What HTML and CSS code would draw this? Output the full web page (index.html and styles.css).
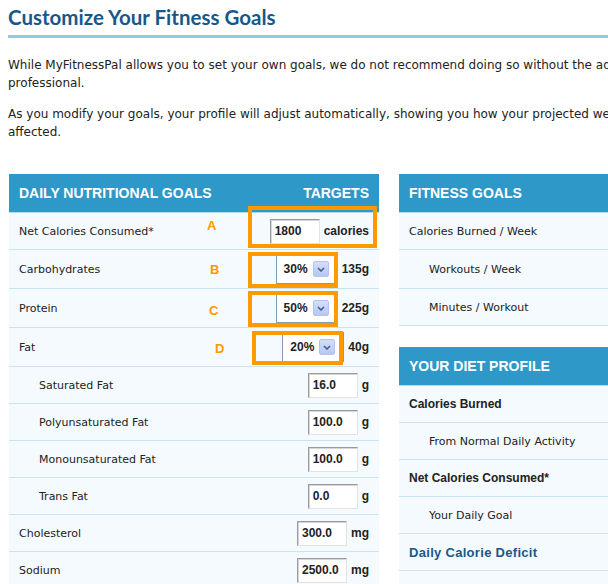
FILE: index.html
```html
<!DOCTYPE html>
<html lang="en">
<head>
  <meta charset="UTF-8">
  <title>Customize Your Fitness Goals</title>
  <link rel="stylesheet" href="styles.css">
</head>
<body>
<div class="page">

  <h1 class="page-title">Customize Your Fitness Goals</h1>
  <p class="intro">While MyFitnessPal allows you to set your own goals, we do not recommend doing so without the advice of a medical professional.</p>
  <p class="intro">As you modify your goals, your profile will adjust automatically, showing you how your projected weight loss will be affected.</p>

  <div class="columns">

    <div class="panel panel-goals">
      <div class="panel-head"><span>DAILY NUTRITIONAL GOALS</span><span>TARGETS</span></div>

      <div class="row">
        <span class="label">Net Calories Consumed*</span>
        <span class="target"><input class="field" type="text" value="1800"><span>calories</span></span>
        <span class="callout callout-a">A</span>
        <span class="mark mark-a"></span>
      </div>

      <div class="row tall">
        <span class="label">Carbohydrates</span>
        <span class="target">
          <span class="select">30%<span class="select-btn"><svg width="8" height="5" viewBox="0 0 8 5"><polyline points="1,1 4,4 7,1" fill="none" stroke="#4a5d8a" stroke-width="1.6"/></svg></span></span>
          <span>135g</span>
        </span>
        <span class="callout callout-b">B</span>
        <span class="mark mark-b"></span>
      </div>

      <div class="row tall">
        <span class="label">Protein</span>
        <span class="target">
          <span class="select">50%<span class="select-btn"><svg width="8" height="5" viewBox="0 0 8 5"><polyline points="1,1 4,4 7,1" fill="none" stroke="#4a5d8a" stroke-width="1.6"/></svg></span></span>
          <span>225g</span>
        </span>
        <span class="callout callout-c">C</span>
        <span class="mark mark-c"></span>
      </div>

      <div class="row tall">
        <span class="label">Fat</span>
        <span class="target">
          <span class="select">20%<span class="select-btn"><svg width="8" height="5" viewBox="0 0 8 5"><polyline points="1,1 4,4 7,1" fill="none" stroke="#4a5d8a" stroke-width="1.6"/></svg></span></span>
          <span>40g</span>
        </span>
        <span class="callout callout-d">D</span>
        <span class="mark mark-d"></span>
      </div>

      <div class="row sub">
        <span class="label">Saturated Fat</span>
        <span class="target"><input class="field" type="text" value="16.0"><span>g</span></span>
      </div>
      <div class="row sub">
        <span class="label">Polyunsaturated Fat</span>
        <span class="target"><input class="field" type="text" value="100.0"><span>g</span></span>
      </div>
      <div class="row sub">
        <span class="label">Monounsaturated Fat</span>
        <span class="target"><input class="field" type="text" value="100.0"><span>g</span></span>
      </div>
      <div class="row sub">
        <span class="label">Trans Fat</span>
        <span class="target"><input class="field" type="text" value="0.0"><span>g</span></span>
      </div>
      <div class="row">
        <span class="label">Cholesterol</span>
        <span class="target"><input class="field" type="text" value="300.0"><span>mg</span></span>
      </div>
      <div class="row">
        <span class="label">Sodium</span>
        <span class="target"><input class="field" type="text" value="2500.0"><span>mg</span></span>
      </div>
    </div>

    <div class="side">
      <div class="panel">
        <div class="panel-head"><span>FITNESS GOALS</span></div>
        <div class="row"><span class="label">Calories Burned / Week</span></div>
        <div class="row tall sub"><span class="label">Workouts / Week</span></div>
        <div class="row sub"><span class="label">Minutes / Workout</span></div>
      </div>

      <div class="panel panel-diet">
        <div class="panel-head"><span>YOUR DIET PROFILE</span></div>
        <div class="row"><span class="label strong">Calories Burned</span></div>
        <div class="row sub"><span class="label">From Normal Daily Activity</span></div>
        <div class="row"><span class="label strong">Net Calories Consumed*</span></div>
        <div class="row sub"><span class="label">Your Daily Goal</span></div>
        <div class="row"><span class="label deficit">Daily Calorie Deficit</span></div>
        <div class="row"></div>
      </div>
    </div>

  </div>
</div>
</body>
</html>
```

FILE: styles.css
```css
html, body {
  overflow: hidden;
}

body {
  margin: 0;
  background: #fff;
  color: #222;
  font-family: "DejaVu Sans", Verdana, sans-serif;
  font-size: 11px;
}

.page {
  width: 740px;
  padding: 0 8px;
}

.page-title {
  margin: 0;
  padding: 4px 0 5px;
  color: #17588a;
  font: 700 20.5px/26px Lato, sans-serif;
  border-bottom: 3px solid #8fcae6;
}

.intro {
  margin: 18px 0 0;
  font-size: 12px;
  line-height: 18px;
}

.intro + .intro {
  margin-top: 13px;
}

.columns {
  display: flex;
  gap: 20px;
  margin-top: 33px;
  padding-left: 1px;
}

.panel-goals {
  width: 370px;
}

.side {
  width: 240px;
}

.panel-diet {
  margin-top: 21px;
}

.panel-head {
  display: flex;
  justify-content: space-between;
  align-items: center;
  height: 38px;
  padding: 0 10px;
  background: #2e98c9;
  border-bottom: 1px solid #b7dbec;
  color: #fff;
  font: bold 14px "Liberation Sans", Arial, sans-serif;
}

.row {
  position: relative;
  display: flex;
  justify-content: space-between;
  align-items: center;
  height: 36px;
  padding: 0 10px;
  background: #f4fafd;
  border-bottom: 1px solid #c8e4f1;
}

.row.tall {
  height: 38px;
}

.row.sub .label {
  padding-left: 20px;
}

.label.strong {
  font: bold 12px "Liberation Sans", Arial, sans-serif;
}

.label.deficit {
  color: #17588a;
  font: bold 13px "Liberation Sans", Arial, sans-serif;
  letter-spacing: 0.3px;
}

.target {
  display: flex;
  align-items: center;
  gap: 4px;
  font: bold 12px "Liberation Sans", Arial, sans-serif;
}

.field {
  box-sizing: border-box;
  width: 50px;
  height: 25px;
  margin: 0;
  padding: 0 0 0 4px;
  border: 1px solid;
  border-color: #9a9a9a #e2e2e2 #e2e2e2 #9a9a9a;
  box-shadow: inset 1px 1px 0 #d6d6d6;
  background: #fff;
  color: #222;
  font: inherit;
}

.select {
  box-sizing: border-box;
  display: flex;
  align-items: center;
  gap: 5px;
  height: 30px;
  padding: 0 8px 0 7px;
  border: 1px solid #7f9db9;
  background: #fff;
}

.select-btn {
  box-sizing: border-box;
  display: flex;
  align-items: center;
  justify-content: center;
  width: 16px;
  height: 16px;
  border: 1px solid #b2c4ee;
  border-radius: 2px;
  background: linear-gradient(#d3def9, #b5c8f4);
}

.callout {
  position: absolute;
  color: #f90;
  font: bold 13px/13px "Liberation Sans", Arial, sans-serif;
}

.callout-a { left: 198px; top: 6px; }
.callout-b { left: 201px; top: 13px; }
.callout-c { left: 200px; top: 15px; }
.callout-d { left: 206px; top: 14px; }

.mark {
  position: absolute;
  box-sizing: border-box;
  border: 4px solid #f90;
}

.mark-a { left: 239px; top: -7px; width: 129px; height: 42px; }
.mark-b { left: 239px; top: 2px; width: 90px; height: 36px; }
.mark-c { left: 239px; top: 2px; width: 90px; height: 36px; }
.mark-d { left: 243px; top: 3px; width: 91px; height: 34px; }
```
